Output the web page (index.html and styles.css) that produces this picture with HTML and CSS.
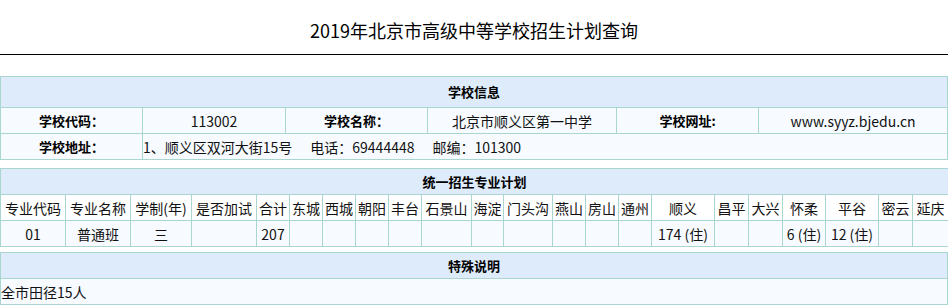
FILE: index.html
```html
<!DOCTYPE html>
<html lang="zh-CN">
<head>
<meta charset="utf-8">
<title>2019年北京市高级中等学校招生计划查询</title>
<link rel="stylesheet" href="styles.css">
</head>
<body>
<header class="page-head">
  <h1 class="page-title">2019年北京市高级中等学校招生计划查询</h1>
</header>

<table class="grid school">
  <colgroup>
    <col class="c-label"><col class="c-value"><col class="c-label"><col class="c-wide"><col class="c-label"><col class="c-wide">
  </colgroup>
  <tr class="head head-tall"><th colspan="6">学校信息</th></tr>
  <tr class="body">
    <td class="label">学校代码：</td>
    <td>113002</td>
    <td class="label">学校名称：</td>
    <td>北京市顺义区第一中学</td>
    <td class="label">学校网址:</td>
    <td>www.syyz.bjedu.cn</td>
  </tr>
  <tr class="body">
    <td class="label">学校地址：</td>
    <td colspan="5" class="left">1、顺义区双河大街15号<span class="sep">电话：69444448</span><span class="sep">邮编：101300</span></td>
  </tr>
</table>

<table class="grid plan">
  <colgroup>
    <col class="w65"><col class="w65"><col class="w61"><col class="w65">
    <col class="w33"><col class="w33"><col class="w33"><col class="w33"><col class="w33">
    <col class="w50"><col class="w32"><col class="w49"><col class="w33"><col class="w33"><col class="w33">
    <col class="w63"><col class="w34"><col class="w34"><col class="w43"><col class="w53"><col class="w34"><col class="w36">
  </colgroup>
  <tr class="head"><th colspan="22">统一招生专业计划</th></tr>
  <tr class="cols">
    <td>专业代码</td><td>专业名称</td><td>学制(年)</td><td>是否加试</td><td>合计</td>
    <td>东城</td><td>西城</td><td>朝阳</td><td>丰台</td><td>石景山</td><td>海淀</td><td>门头沟</td>
    <td>燕山</td><td>房山</td><td>通州</td><td>顺义</td><td>昌平</td><td>大兴</td><td>怀柔</td>
    <td>平谷</td><td>密云</td><td>延庆</td>
  </tr>
  <tr class="body">
    <td>01</td><td>普通班</td><td>三</td><td></td><td>207</td>
    <td></td><td></td><td></td><td></td><td></td><td></td><td></td>
    <td></td><td></td><td></td><td>174 (住)</td><td></td><td></td><td>6 (住)</td>
    <td>12 (住)</td><td></td><td></td>
  </tr>
</table>

<table class="grid notes">
  <tr class="head"><th>特殊说明</th></tr>
  <tr class="body"><td class="left">全市田径15人</td></tr>
</table>
</body>
</html>
```

FILE: styles.css
```css
html, body {
  margin: 0;
  padding: 0;
  background: #fff;
}

body {
  font-family: "Noto Sans CJK SC", "Noto Sans", sans-serif;
  color: #111;
}

/* page title bar with the rule underneath */
.page-head {
  height: 54px;
  border-bottom: 1px solid #000;
  display: flex;
  align-items: center;
  justify-content: center;
}

.page-title {
  margin: 6px 0 0;
  font-size: 18px;
  font-weight: normal;
  color: #000;
  line-height: 20px;
}

/* shared bordered table */
.grid {
  width: 948px;
  border-collapse: collapse;
  table-layout: fixed;
  font-size: 14px;
}

.grid th,
.grid td {
  border: 1px solid #a9d6d1;
  padding: 0;
  height: 25px;
  line-height: 20px;
  text-align: center;
  white-space: nowrap;
  overflow: hidden;
}

.grid .head th {
  background: #deebfb;
  color: #000;
  font-weight: bold;
  font-size: 13px;
}

.grid .head-tall th {
  height: 30px;
}

.grid .body td {
  background: #f7fbff;
}

.grid .cols td {
  background: #fff;
}

.grid td.label {
  font-weight: bold;
  font-size: 13px;
  color: #000;
}

.grid td.left {
  text-align: left;
}

.sep {
  margin-left: 18px;
}

.school {
  margin-top: 21px;
}

.plan {
  margin-top: 8px;
}

.notes {
  margin-top: 5px;
}

/* column widths */
.c-label { width: 142px; }
.c-value { width: 143px; }
.c-wide  { width: 189px; }

.w65 { width: 65px; }
.w61 { width: 61px; }
.w33 { width: 33px; }
.w50 { width: 50px; }
.w32 { width: 32px; }
.w49 { width: 49px; }
.w63 { width: 63px; }
.w34 { width: 34px; }
.w43 { width: 43px; }
.w53 { width: 53px; }
.w36 { width: 36px; }
```
